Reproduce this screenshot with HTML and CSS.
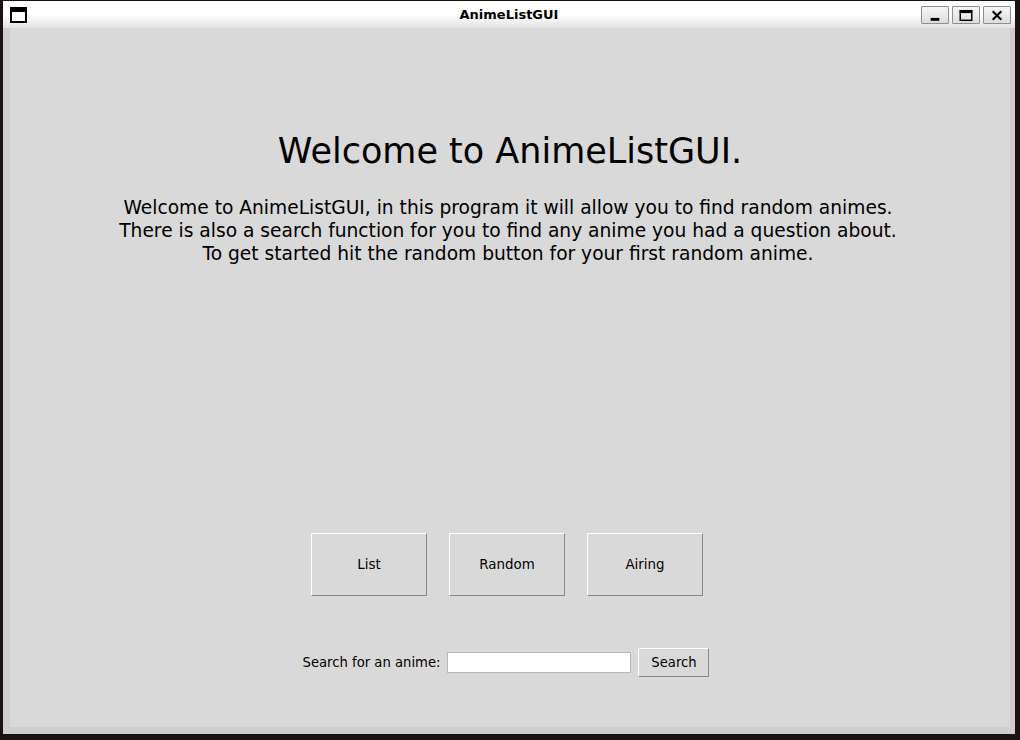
FILE: index.html
```html
<!DOCTYPE html>
<html>
<head>
<meta charset="utf-8">
<link rel="stylesheet" href="styles.css">
</head>
<body>
<div class="window">
  <div class="titlebar">
    <svg class="appicon" width="17" height="16" viewBox="0 0 17 16">
      <rect x="1" y="1" width="15" height="14" fill="#fff" stroke="#000" stroke-width="2"/>
      <rect x="1" y="1" width="15" height="4" fill="#000"/>
    </svg>
    <div class="title">AnimeListGUI</div>
    <div class="wbtns">
      <div class="wbtn"><svg width="27" height="17" viewBox="0 0 27 17"><rect x="9" y="11" width="9" height="3" fill="#000"/></svg></div>
      <div class="wbtn"><svg width="27" height="17" viewBox="0 0 27 17"><rect x="7.5" y="3.5" width="12" height="10" fill="none" stroke="#000" stroke-width="1.5"/><rect x="7" y="3" width="13" height="3" fill="#000"/></svg></div>
      <div class="wbtn"><svg width="27" height="17" viewBox="0 0 27 17"><path d="M9 4 L18 13 M18 4 L9 13" stroke="#000" stroke-width="2.2"/></svg></div>
    </div>
  </div>
  <div class="frame">
    <div class="content">
      <h1 class="heading">Welcome to AnimeListGUI.</h1>
      <p class="intro">Welcome to AnimeListGUI, in this program it will allow you to find random animes.<br>There is also a search function for you to find any anime you had a question about.<br>To get started hit the random button for your first random anime.</p>
      <div class="buttons">
        <button class="tkbtn big">List</button>
        <button class="tkbtn big">Random</button>
        <button class="tkbtn big">Airing</button>
      </div>
      <div class="search">
        <span class="label">Search for an anime:</span>
        <input class="entry" type="text">
        <button class="tkbtn small">Search</button>
      </div>
    </div>
  </div>
</div>
</body>
</html>
```
FILE: styles.css
```css
html, body {
  margin: 0;
  padding: 0;
  background: #1b1113;
  width: 1020px;
  height: 740px;
  overflow: hidden;
  font-family: "DejaVu Sans", sans-serif;
}
.window {
  margin: 1px 0 0 3px;
  width: 1012px;
  display: flex;
  flex-direction: column;
}
.titlebar {
  height: 27px;
  background: linear-gradient(#ffffff 0%, #ffffff 50%, #e2e2e2 100%);
  display: flex;
  align-items: center;
  position: relative;
}
.appicon {
  margin-left: 7px;
  margin-top: 1px;
}
.title {
  position: absolute;
  left: 0;
  right: 0;
  text-align: center;
  font-weight: bold;
  font-size: 13px;
  top: 6px;
  pointer-events: none;
}
.wbtns {
  margin-left: auto;
  margin-right: 4px;
  display: flex;
  gap: 3px;
  margin-top: 1px;
}
.wbtn {
  width: 26px;
  height: 16px;
  border: 1px solid #8e8e8e;
  border-radius: 1px;
  background: linear-gradient(#f6f6f6, #dedede);
  display: flex;
  align-items: center;
  justify-content: center;
}
.wbtn svg { display: block; }
.frame {
  background: #cecece;
  padding: 0 5px 7px 7px;
}
.content {
  background: #d9d9d9;
  height: 699px;
  display: flex;
  flex-direction: column;
  align-items: center;
}
.heading {
  margin: 103px 0 0 0;
  font-weight: normal;
  font-size: 35px;
  line-height: 41px;
  color: #000;
}
.intro {
  margin: 24px 4px 0 0;
  text-align: center;
  font-size: 18.65px;
  line-height: 23px;
  color: #000;
}
.buttons {
  margin-top: 268px;
  display: flex;
  gap: 22px;
  margin-right: 6px;
}
.tkbtn {
  font-family: "DejaVu Sans", sans-serif;
  background: #d9d9d9;
  color: #000;
  border: 1px solid;
  border-color: #ffffff #888888 #888888 #ffffff;
  padding: 0;
  margin: 0;
}
.big {
  width: 116px;
  height: 63px;
  font-size: 13.4px;
}
.search {
  margin-top: 52px;
  display: flex;
  align-items: center;
  margin-right: 8px;
}
.label {
  font-size: 13.2px;
  color: #000;
}
.entry {
  margin: 0 0 0 7px;
  width: 184px;
  height: 21px;
  box-sizing: border-box;
  border: 1px solid #b8b8b8;
  background: #fff;
  padding: 0;
}
.small {
  margin-left: 7px;
  width: 71px;
  height: 29px;
  font-size: 13.2px;
}
```
